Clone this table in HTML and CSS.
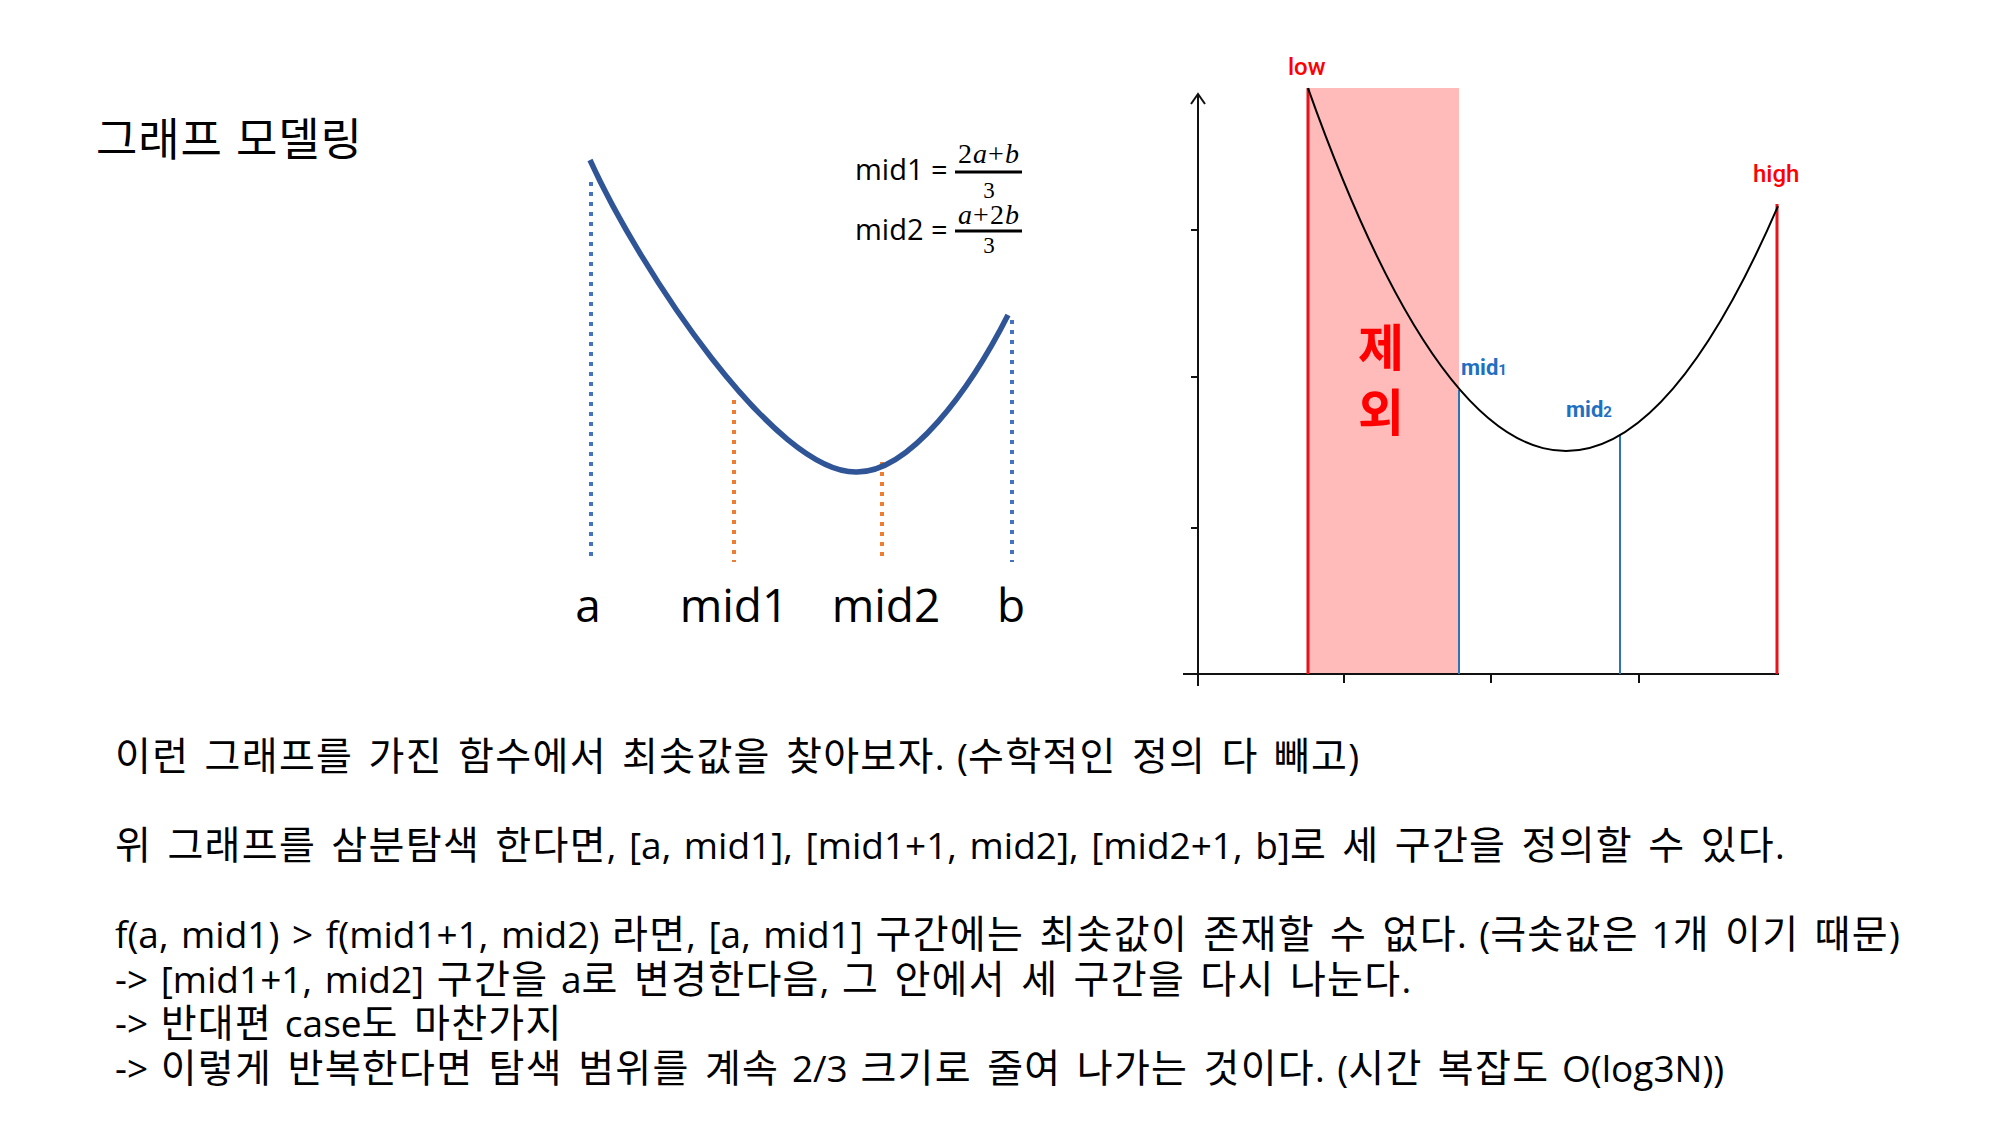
FILE: index.html
```html
<!DOCTYPE html>
<html lang="ko">
<head>
<meta charset="utf-8">
<title>그래프 모델링</title>
<link rel="stylesheet" href="styles.css">
</head>
<body>
<main class="slide">
  <section class="top">
    <h1 class="title">그래프 모델링</h1>

    <svg class="fig fig-left" viewBox="540 100 540 560" width="540" height="560">
      <g class="guide guide-ab">
        <line x1="591" y1="182" x2="591" y2="562"/>
        <line x1="1012" y1="320" x2="1012" y2="562"/>
      </g>
      <g class="guide guide-mid">
        <line x1="734" y1="400" x2="734" y2="562"/>
        <line x1="882" y1="462" x2="882" y2="562"/>
      </g>
      <path class="curve-left" d="M590 160 C640 270 775 474 857 472 C910 472 970 390 1008 315"/>

      <text class="axis-lbl" x="588" y="622">a</text>
      <text class="axis-lbl" x="734" y="622">mid1</text>
      <text class="axis-lbl" x="886" y="622">mid2</text>
      <text class="axis-lbl" x="1011" y="622">b</text>

      <text class="f-lhs" x="855" y="180">mid1 =</text>
      <text class="f-num" x="989" y="163">2<tspan class="it">a</tspan>+<tspan class="it">b</tspan></text>
      <line class="f-bar" x1="955" y1="172" x2="1022" y2="172"/>
      <text class="f-den" x="989" y="198">3</text>

      <text class="f-lhs" x="855" y="240">mid2 =</text>
      <text class="f-num" x="989" y="224"><tspan class="it">a</tspan>+2<tspan class="it">b</tspan></text>
      <line class="f-bar" x1="955" y1="231" x2="1022" y2="231"/>
      <text class="f-den" x="989" y="253">3</text>
    </svg>

    <svg class="fig fig-right" viewBox="1160 40 680 660" width="680" height="660">
      <rect class="excluded" x="1308" y="88" width="151" height="586"/>
      <g class="axis">
        <line x1="1198" y1="94" x2="1198" y2="686"/>
        <polyline points="1191,104 1198,94 1205,104"/>
        <line x1="1183" y1="674" x2="1779" y2="674"/>
        <line x1="1191" y1="230" x2="1198" y2="230"/>
        <line x1="1191" y1="377" x2="1198" y2="377"/>
        <line x1="1191" y1="528" x2="1198" y2="528"/>
        <line x1="1344" y1="674" x2="1344" y2="683"/>
        <line x1="1491" y1="674" x2="1491" y2="683"/>
        <line x1="1639" y1="674" x2="1639" y2="683"/>
      </g>
      <line class="bound" x1="1308" y1="88" x2="1308" y2="674"/>
      <line class="bound" x1="1777" y1="204" x2="1777" y2="674"/>
      <line class="mid-line" x1="1459" y1="390" x2="1459" y2="674"/>
      <line class="mid-line" x1="1620" y1="435" x2="1620" y2="674"/>
      <path class="curve-right" d="M1308 88.2 Q1543 749.1 1778 206.1"/>

      <text class="t-red" x="1288" y="75">low</text>
      <text class="t-red" x="1753" y="182">high</text>
      <text class="t-blue" x="1461" y="375">mid<tspan class="sub">1</tspan></text>
      <text class="t-blue" x="1566" y="417">mid<tspan class="sub">2</tspan></text>
      <text class="excl-lbl" x="1381" y="366">제</text>
      <text class="excl-lbl" x="1381" y="431">외</text>
    </svg>
  </section>

  <section class="notes">
    <p class="para"><span class="k">이런 그래프를 가진 함수에서 최솟값을 찾아보자</span>. (<span class="k">수학적인 정의 다 빼고</span>)</p>
    <p class="para"><span class="k">위 그래프를 삼분탐색 한다면</span>, [a, mid1], [mid1+1, mid2], [mid2+1, b]<span class="k">로 세 구간을 정의할 수 있다</span>.</p>
    <div class="para">
      <p class="line">f(a, mid1) &gt; f(mid1+1, mid2) <span class="k">라면</span>, [a, mid1] <span class="k">구간에는 최솟값이 존재할 수 없다</span>. (<span class="k">극솟값은</span> 1<span class="k">개 이기 때문</span>)</p>
      <p class="line">-&gt; [mid1+1, mid2] <span class="k">구간을</span> a<span class="k">로 변경한다음</span>, <span class="k">그 안에서 세 구간을 다시 나눈다</span>.</p>
      <p class="line">-&gt; <span class="k">반대편</span> case<span class="k">도 마찬가지</span></p>
      <p class="line">-&gt; <span class="k">이렇게 반복한다면 탐색 범위를 계속</span> 2/3 <span class="k">크기로 줄여 나가는 것이다</span>. (<span class="k">시간 복잡도</span> O(log3N))</p>
    </div>
  </section>
</main>
</body>
</html>
```

FILE: styles.css
```css
html, body {
  margin: 0;
  padding: 0;
  background: #ffffff;
}

.slide {
  width: 2000px;
  height: 1125px;
  overflow: hidden;
  color: #000;
}

.top {
  display: flex;
  align-items: flex-start;
  height: 700px;
}

.title {
  margin: 113px 0 0 96px;
  width: 444px;
  font-family: "Noto Sans CJK KR", sans-serif;
  font-size: 45px;
  letter-spacing: 0.8px;
  line-height: 48px;
  font-weight: 400;
  white-space: nowrap;
}

.fig {
  display: block;
  flex: none;
  overflow: visible;
}

.fig-left {
  margin-top: 100px;
}

.fig-right {
  margin-top: 40px;
  margin-left: 80px;
}

/* left diagram */
.guide line {
  stroke-width: 4;
  stroke-dasharray: 4 6;
}

.guide-ab line {
  stroke: #4472c4;
}

.guide-mid line {
  stroke: #ed7d31;
}

.curve-left {
  fill: none;
  stroke: #2f5597;
  stroke-width: 5.5;
  stroke-linecap: butt;
}

.axis-lbl {
  font-family: "Open Sans", sans-serif;
  font-size: 46px;
  text-anchor: middle;
  fill: #000;
}

.f-lhs {
  font-family: "Open Sans", sans-serif;
  font-size: 29px;
  fill: #000;
}

.f-num {
  font-family: "Liberation Serif", serif;
  font-size: 28px;
  letter-spacing: 1px;
  text-anchor: middle;
  fill: #000;
}

.f-num .it {
  font-style: italic;
}

.f-den {
  font-family: "Liberation Serif", serif;
  font-size: 23px;
  text-anchor: middle;
  fill: #000;
}

.f-bar {
  stroke: #000;
  stroke-width: 3;
}

/* right diagram */
.excluded {
  fill: #ffbaba;
}

.axis line,
.axis polyline {
  stroke: #111;
  stroke-width: 2;
  fill: none;
}

.bound {
  stroke: #e8131b;
  stroke-width: 3;
}

.mid-line {
  stroke: #2e75b6;
  stroke-width: 2;
}

.curve-right {
  fill: none;
  stroke: #000;
  stroke-width: 2;
}

.t-red {
  font-family: Roboto, sans-serif;
  font-weight: 500;
  font-size: 24px;
  fill: #ff0000;
}

.t-blue {
  font-family: Roboto, sans-serif;
  font-weight: 700;
  font-size: 22px;
  fill: #1f70c1;
}

.t-blue .sub {
  font-size: 15px;
}

.excl-lbl {
  font-family: "Noto Sans CJK KR", sans-serif;
  font-weight: 700;
  font-size: 50px;
  text-anchor: middle;
  fill: #ff0000;
}

/* notes */
.notes {
  padding: 34px 0 0 115px;
  font-family: "Open Sans", "Noto Sans CJK KR", sans-serif;
  font-size: 37px;
  line-height: 44.5px;
  word-spacing: 3px;
  white-space: nowrap;
}

.notes .k {
  font-family: "Noto Sans CJK KR", sans-serif;
  font-size: 39px;
  letter-spacing: 1.3px;
  line-height: 1;
}

.para {
  margin: 0 0 44.5px 0;
}

.line {
  margin: 0;
}
```
